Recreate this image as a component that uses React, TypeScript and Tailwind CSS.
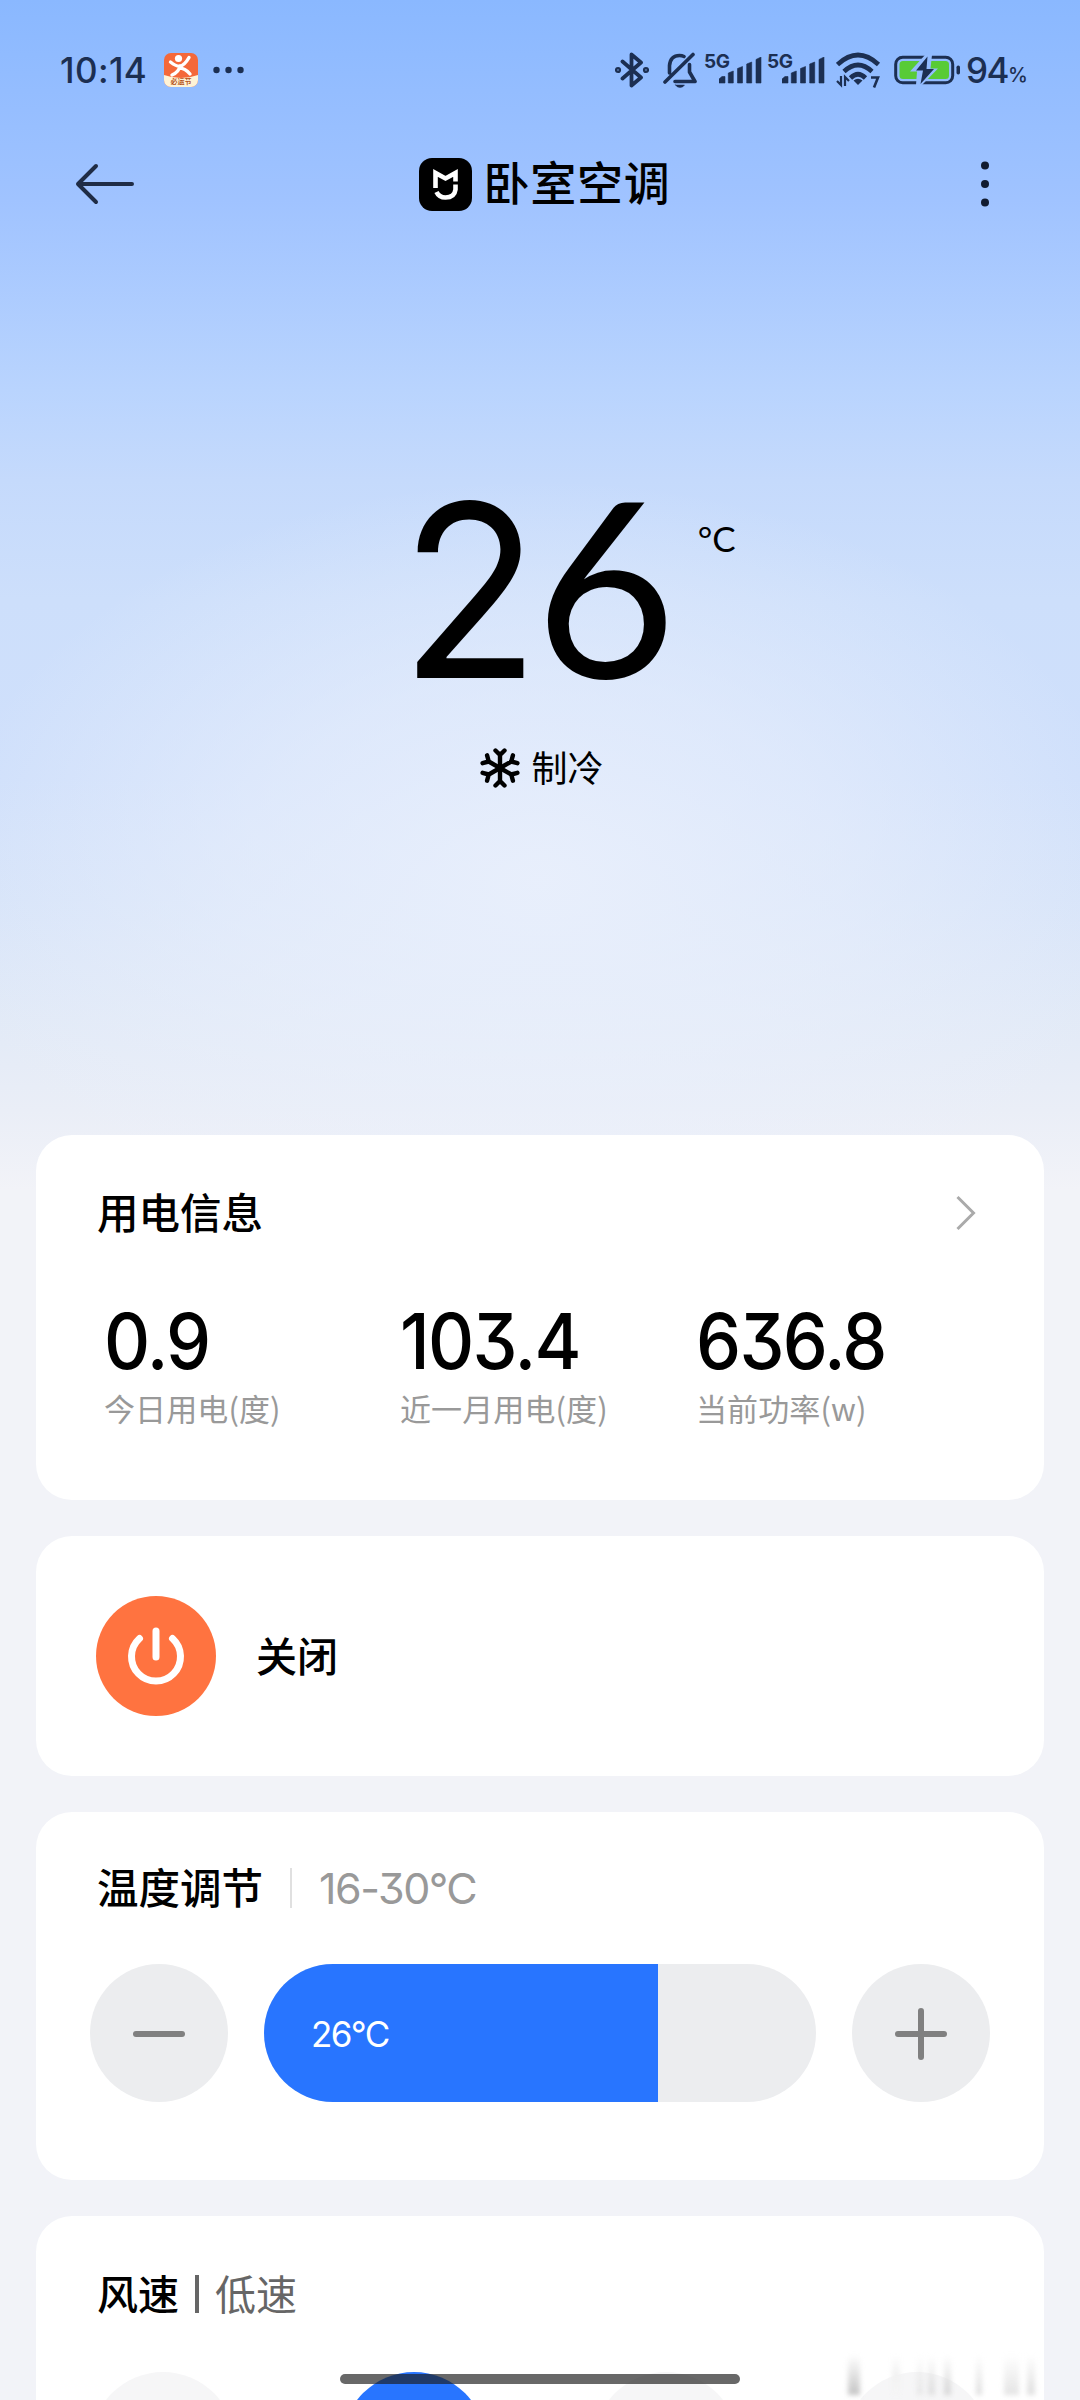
import { ReactNode, useState } from "react";

interface Consumo {
  valor: string;
  rotulo: string;
}

const CONSUMO: Consumo[] = [
  { valor: "0.9", rotulo: "今日用电(度)" },
  { valor: "103.4", rotulo: "近一月用电(度)" },
  { valor: "636.8", rotulo: "当前功率(w)" },
];

const MIN = 16;
const MAX = 30;
const VELOCIDADES = ["自动", "低速", "中速", "高速"];

function Sinal() {
  return (
    <div className="relative h-[36px] w-[58px]">
      <span className="absolute left-0 top-0 font-[Inter] text-[19px] font-bold leading-[19px] tracking-[-0.5px]">
        5G
      </span>
      <svg className="absolute left-[15px] top-[5px]" width="43" height="27" viewBox="0 0 43 27" fill="currentColor">
        <path d="M0 26v-4l3-2.5h3V26zM9.3 26V16l5-2V26zM18.5 26V11.5l5-2V26zM27.7 26V7l5-2V26zM37 26V2.500L42 0V26z" stroke="currentColor" strokeWidth="0.6" strokeLinejoin="round" />
      </svg>
    </div>
  );
}

function BarraStatus() {
  return (
    <div className="flex h-[140px] items-center pl-[60px] text-[#1c2f52]">
      <span className="w-[105px] font-[Inter] text-[35px] font-medium tracking-[0.4px]">10:14</span>
      <svg className="-ml-[1px]" width="34" height="34" viewBox="0 0 34 34">
        <rect width="34" height="34" rx="7" fill="#f4683a" />
        <path d="M0 22q17 6 34 0v5a7 7 0 0 1-7 7H7a7 7 0 0 1-7-7z" fill="#fff3d6" />
        <circle cx="14.5" cy="5.5" r="3.6" fill="#fff" />
        <path d="M6.500 9q5 4 9 4.500 5-1 9.500-9M16 13q-1 6-8 9M15 15q6 0 11 6" fill="none" stroke="#fff" strokeWidth="3.400" strokeLinecap="round" />
        <text x="17" y="31" fontSize="7" fontWeight="700" textAnchor="middle" fill="#b4531c" fontFamily="Noto Sans CJK SC, sans-serif">必运节</text>
      </svg>
      <svg className="ml-[15px]" width="32" height="8" viewBox="0 0 32 8" fill="currentColor">
        <circle cx="3.500" cy="4" r="3.200" />
        <circle cx="15.500" cy="4" r="3.200" />
        <circle cx="27.500" cy="4" r="3.200" />
      </svg>

      <div className="ml-[370px] flex items-center">
        {/* Bluetooth */}
        <svg width="34" height="36" viewBox="0 0 34 36" fill="none" stroke="currentColor" strokeWidth="3.800" strokeLinejoin="round" strokeLinecap="round">
          <path d="M7.500 9.500 26 25.500 16.500 33.500V2.500L26 10.500 7.500 26.500" />
          <circle cx="3" cy="18" r="1.200" />
          <circle cx="31" cy="18" r="1.200" />
        </svg>
        {/* Sino desligado */}
        <svg className="ml-[14px]" width="35" height="36" viewBox="0 0 35 36" fill="none" stroke="currentColor" strokeWidth="3.600" strokeLinecap="round" strokeLinejoin="round">
          <path d="M2 30 30 2.500M6.500 21V13.500Q7.500 3.500 16.500 3.500 19 3.500 21 4.500M26.500 12.500V20L32 29.500H12" />
          <path d="M12.500 33h9q-1.500 2.500-4.500 2.500T12.500 33z" fill="currentColor" strokeWidth="0.500" />
        </svg>
        <div className="ml-[6px]">
          <Sinal />
        </div>
        <div className="ml-[5px]">
          <Sinal />
        </div>
        {/* Wi-Fi 7 */}
        <svg className="ml-[11px]" width="46" height="36" viewBox="0 0 46 36" fill="none" stroke="currentColor" strokeWidth="4.600">
          <path d="M1.500 12.500Q22 -6.500 42.500 12.500M8 19.500Q22 6.500 36 19.500M14.500 26Q22 18.500 29.500 26" />
          <path d="M17.500 28.500q4.500-3.500 9 0L22 33z" fill="currentColor" stroke="none" />
          <path d="M1 29l4 4V24M9 34v-9l4 4" strokeWidth="2.200" />
          <path d="M35 25.500h7L38 35.500" strokeWidth="2.600" />
        </svg>
        {/* Bateria carregando */}
        <svg className="ml-[12px]" width="68" height="30" viewBox="0 0 68 30">
          <rect x="1.700" y="2.200" width="57" height="25.600" rx="7" fill="none" stroke="currentColor" strokeWidth="3" />
          <rect x="5.500" y="6" width="49.500" height="18" rx="3.500" fill="#58cb36" />
          <path d="M31 0 16 16.500h7L22 30h6L44 13.500h-7.500L38 0z" fill="#93bcff" />
          <path d="M33.500 1.500 22 15.500h7l-2.500 13.500L40 14h-7.500z" fill="currentColor" />
          <rect x="62.500" y="10.500" width="3.500" height="9" rx="1.700" fill="currentColor" />
        </svg>
        <span className="ml-[4px] font-[Inter] text-[35px] font-medium tracking-[-1.500px]">94</span>
        <span className="mt-[10px] font-[Inter] text-[20px] font-medium">%</span>
      </div>
    </div>
  );
}

function Cabecalho() {
  return (
    <header className="flex h-[88px] items-center justify-between pl-[75px] pr-[90px]">
      <svg width="60" height="42" viewBox="0 0 60 42" fill="none" stroke="#1f2c45" strokeWidth="4" strokeLinecap="round" strokeLinejoin="round">
        <path d="M57 21H3M21 3 3 21l18 18" />
      </svg>
      <div className="mr-[25px] flex items-center">
        <svg width="53" height="53" viewBox="0 0 53 53">
          <rect width="53" height="53" rx="13" fill="#000" />
          {/* M aberto em cima, sorriso embaixo */}
          <path d="M16.500 30V15l10 5.500 10-5.500v8.500M36.500 26.500v5q-1 8-10 8-6.500 0-9-5.500" fill="none" stroke="#fff" strokeWidth="4.600" />
        </svg>
        <h1 className="-mt-[8px] ml-[11px] text-[46px] font-medium leading-none tracking-[0.8px]">卧室空调</h1>
      </div>
      <svg width="10" height="46" viewBox="0 0 10 46" fill="#111b30">
        <circle cx="5" cy="4.500" r="4" />
        <circle cx="5" cy="23" r="4" />
        <circle cx="5" cy="41.500" r="4" />
      </svg>
    </header>
  );
}

function FlocoNeve() {
  return (
    <svg width="40" height="40" viewBox="0 0 40 40" fill="none" stroke="#000" strokeWidth="4.400" strokeLinecap="round" strokeLinejoin="round">
      {[0, 60, 120, 180, 240, 300].map((g) => (
        <path key={g} d="M20 20V6M15.500 2.500 20 7l4.500-4.500" transform={`rotate(${g} 20 20)`} />
      ))}
    </svg>
  );
}

function Cartao({ className, children }: { className: string; children: ReactNode }) {
  return <section className={`mx-[36px] rounded-[36px] bg-white ${className}`}>{children}</section>;
}

export default function App() {
  const [temperatura, setTemperatura] = useState(26);
  const [velocidade, setVelocidade] = useState(1);
  const preenchido = ((temperatura - MIN) / (MAX - MIN)) * 100;
  const [dezena, unidade] = String(temperatura);

  return (
    <main className="relative h-[2400px] w-[1080px] overflow-hidden bg-[#f2f3f8] bg-[radial-gradient(ellipse_600px_400px_at_50%_880px,rgba(234,240,252,0.9),rgba(234,240,252,0.55)_50%,rgba(234,240,252,0)),linear-gradient(180deg,#8ab8ff_0px,#a0c3ff_200px,#b9d4fe_390px,#c5dafc_480px,#cddffb_600px,#d0e0fb_780px,#d7e4f9_900px,#e2eaf7_1020px,#eaeef7_1110px,#f2f3f8_1190px)] font-['Noto_Sans_CJK_SC',sans-serif] text-black">
      <div className="h-[1135px]">
        <BarraStatus />
        <Cabecalho />

        <div className="flex h-[470px] justify-center pt-[210px]">
          <div className="ml-[55.5px] flex h-[292px] items-baseline leading-[292px]">
            <span className="inline-block w-[135px] origin-left scale-x-[0.95] font-[Inter] text-[241px]">{dezena}</span>
            <span className="inline-block w-[132px] font-[Lato] text-[244px]">{unidade}</span>
          </div>
          <span className="ml-[31px] mt-[74px] font-[Lato] text-[35px]">°C</span>
        </div>
        <div className="mt-[50px] flex items-center justify-center gap-[11px] pl-[4px]">
          <FlocoNeve />
          <span className="-mt-[4px] text-[36px] leading-[40px]">制冷</span>
        </div>
      </div>

      <Cartao className="h-[365px] px-[61px] pt-[48px]">
        <div className="flex h-[60px] items-center justify-between pr-[7px]">
          <h2 className="-mt-[4px] text-[41.5px] font-medium leading-[60px]">用电信息</h2>
          <svg width="20" height="36" viewBox="0 0 20 36" fill="none" stroke="#aaa" strokeWidth="3">
            <path d="M1.500 2 17.500 18 1.500 34" />
          </svg>
        </div>
        <div className="mt-[60px] grid grid-cols-[296px_296px_1fr] pl-[7px]">
          {CONSUMO.map((c) => (
            <div key={c.rotulo}>
              <div className="origin-left scale-x-[0.93] font-[Inter] text-[77px] font-medium leading-[76px] tracking-[-1.8px] [font-feature-settings:'cv09']">
                {c.valor}
              </div>
              <div className="mt-[9px] text-[31px] leading-[40px] tracking-[0.1px] text-[#999]">{c.rotulo}</div>
            </div>
          ))}
        </div>
      </Cartao>

      <Cartao className="mt-[36px] flex h-[240px] items-center pl-[60px]">
        <button className="flex h-[120px] w-[120px] items-center justify-center rounded-full bg-[#ff7340]" aria-label="关闭">
          <svg width="60" height="60" viewBox="0 0 60 60" fill="none" stroke="#fff" strokeWidth="7" strokeLinecap="round">
            <path d="M13.500 12.500A24.500 24.500 0 1 0 46.500 12.500M30 5V31" />
          </svg>
        </button>
        <span className="-mt-[3px] ml-[40px] text-[41px] font-medium">关闭</span>
      </Cartao>

      <Cartao className="mt-[36px] h-[368px] px-[54px] pt-[46px]">
        <div className="flex h-[60px] items-center pl-[7px]">
          <h2 className="-mt-[4px] text-[41.5px] font-medium leading-[60px]">温度调节</h2>
          <span className="ml-[27px] h-[40px] w-[2px] bg-[#e0e0e0]" />
          <span className="ml-[27px] font-[Inter] text-[43px] leading-[60px] tracking-[-1.5px] text-[#999] [font-feature-settings:'cv09']">
            16-30°C
          </span>
        </div>
        <div className="mt-[46px] flex gap-[36px]">
          <button
            onClick={() => setTemperatura((t) => Math.max(MIN, t - 1))}
            className="flex h-[138px] w-[138px] items-center justify-center rounded-full bg-[#ecedef]"
            aria-label="-"
          >
            <span className="mt-[2px] h-[6px] w-[52px] rounded-full bg-[#808080]" />
          </button>
          <div className="h-[138px] flex-1 overflow-hidden rounded-full bg-[#ecedef]">
            <div
              className="flex h-full items-center bg-[#2875ff] pl-[47px] pt-[2px] font-[Inter] text-[35px] tracking-[-1.6px] text-white"
              style={{ width: `${preenchido}%` }}
            >
              {temperatura}°C
            </div>
          </div>
          <button
            onClick={() => setTemperatura((t) => Math.min(MAX, t + 1))}
            className="flex h-[138px] w-[138px] items-center justify-center rounded-full bg-[#ecedef]"
            aria-label="+"
          >
            <svg className="mt-[2px]" width="52" height="52" viewBox="0 0 52 52" fill="none" stroke="#808080" strokeWidth="6" strokeLinecap="round">
              <path d="M3 26H49M26 3V49" />
            </svg>
          </button>
        </div>
      </Cartao>

      <Cartao className="mt-[36px] h-[360px] px-[55px] pt-[46px]">
        <h2 className="flex items-center pl-[6px] text-[41px] font-medium leading-[60px]">
          风速
          <span className="ml-[16px] mt-[3px] h-[38px] w-[4px] bg-[#666]" />
          <span className="ml-[16px] font-normal text-[#666]">{VELOCIDADES[velocidade]}</span>
        </h2>
        <div className="mt-[50px] flex justify-between">
          {VELOCIDADES.map((v, i) => (
            <button
              key={v}
              onClick={() => setVelocidade(i)}
              aria-label={v}
              className={`h-[144px] w-[144px] rounded-full ${i === velocidade ? "bg-[#2875ff]" : "bg-[#f6f6f7]"}`}
            />
          ))}
        </div>
      </Cartao>

      {/* Manchas suaves no canto inferior direito */}
      <div className="absolute left-[842px] top-[2355px] flex h-[40px] w-[204px] blur-[2.5px]">
        <div className="ml-[6px] h-full w-[12px] bg-linear-to-b from-transparent to-[#c4c4c4]" />
        <div className="ml-[32px] h-full w-[8px] bg-linear-to-b from-transparent via-[#f1f1f1] to-[#f5f5f5]" />
        <div className="ml-[17px] h-full w-[6px] bg-linear-to-b from-transparent to-[#e6e6e6]" />
        <div className="ml-[5px] h-full w-[7px] bg-linear-to-b from-transparent to-[#dedede]" />
        <div className="ml-[9px] h-full w-[7px] bg-linear-to-b from-transparent to-[#d6d6d6]" />
        <div className="ml-[25px] h-full w-[6px] bg-linear-to-b from-transparent to-[#dedede]" />
        <div className="ml-[22px] h-full w-[15px] bg-linear-to-b from-transparent to-[#e4e4e4]" />
        <div className="ml-[8px] h-full w-[8px] bg-linear-to-b from-transparent to-[#dedede]" />
      </div>

      {/* Indicador de início */}
      <div className="absolute bottom-[16px] left-[340px] h-[10px] w-[400px] rounded-full bg-[rgba(28,28,28,0.667)]" />
    </main>
  );
}
